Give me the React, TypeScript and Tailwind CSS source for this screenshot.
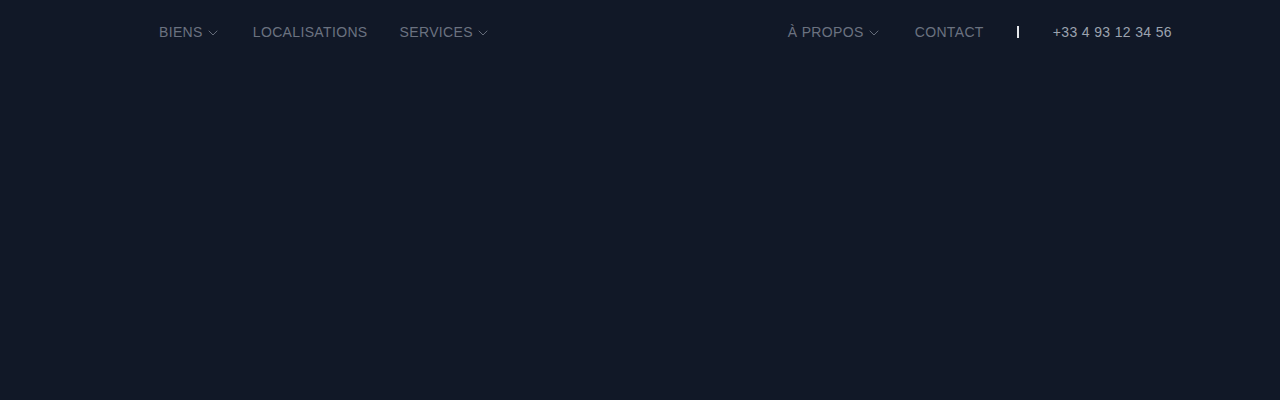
import { ChevronDown } from 'lucide-react'

const font = { fontFamily: '"Liberation Sans", Arial, Helvetica, sans-serif' }

function NavItem({ label, menu }: { label: string; menu?: boolean }) {
  return (
    <a href="#" className="flex items-center gap-[2px] text-[14px] tracking-[0.025em] text-[#6b7280] hover:text-gray-300">
      {label}
      {menu && <ChevronDown size={16} strokeWidth={1.4} className="mt-[1px]" />}
    </a>
  )
}

export default function App() {
  return (
    <div className="min-h-[400px] w-full bg-[#111827]" style={font}>
      {/* Top navigation */}
      <header className="flex h-16 items-center justify-between pl-[159px] pr-[108px]">
        <nav className="flex items-center gap-8">
          <NavItem label="BIENS" menu />
          <NavItem label="LOCALISATIONS" />
          <NavItem label="SERVICES" menu />
        </nav>
        <nav className="flex items-center gap-[33px]">
          <NavItem label="À PROPOS" menu />
          <NavItem label="CONTACT" />
          <span className="h-3 w-[2px] bg-gray-200" />
          <a href="tel:+33493123456" className="ml-[1px] text-[14px] tracking-[0.025em] text-[#9ca3af]">
            +33 4 93 12 34 56
          </a>
        </nav>
      </header>
    </div>
  )
}
